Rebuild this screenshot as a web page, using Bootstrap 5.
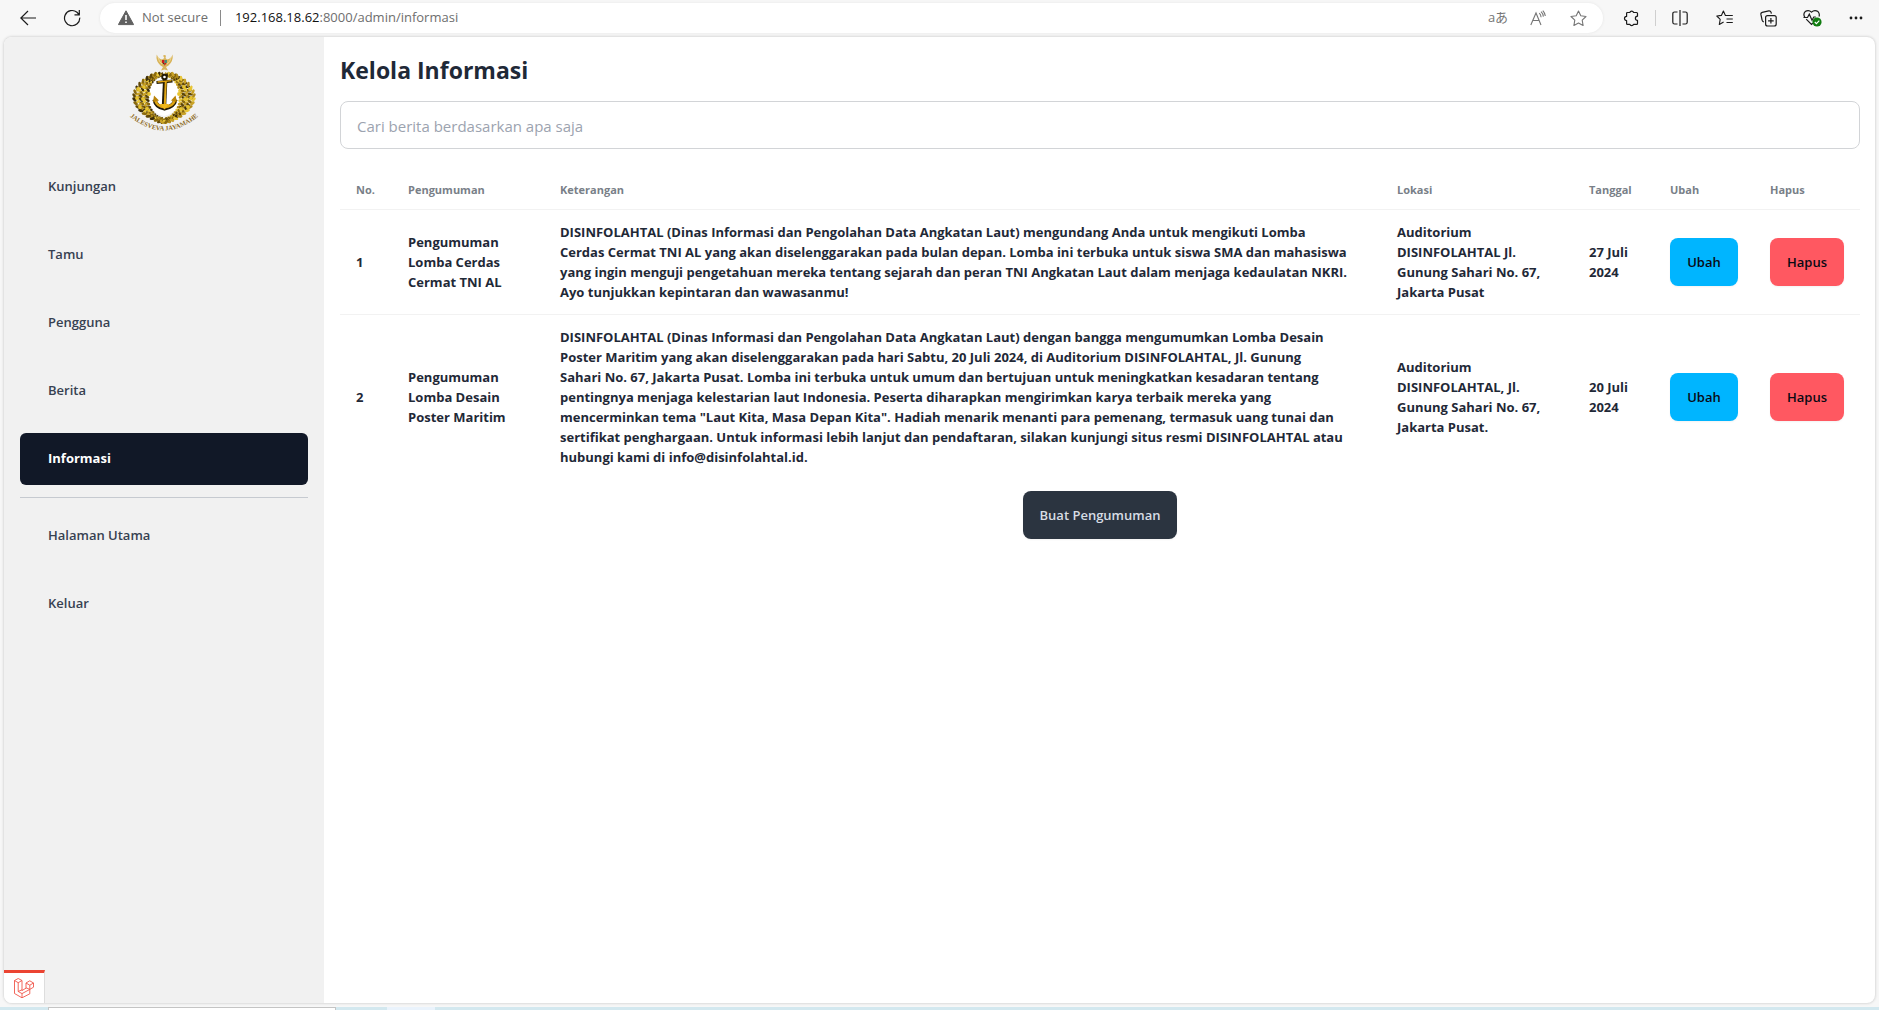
<!DOCTYPE html>
<html lang="id">
<head>
<meta charset="utf-8">
<meta name="viewport" content="width=device-width, initial-scale=1">
<title>Kelola Informasi</title>
<link href="https://cdn.jsdelivr.net/npm/bootstrap@5.3.0/dist/css/bootstrap.min.css" rel="stylesheet">
<style>
  :root { --ink: #1f2937; --chrome: #f7f7f7; --side: #f1f1f1; }
  body { font-family: "Open Sans", "Noto Sans", "Noto Sans CJK JP", sans-serif; color: var(--ink); background: var(--chrome); min-height: 100vh; }
  .browser-bar { height: 36px; padding: 0 1px 0 6px; }
  .tool-btn { width: 44px; height: 30px; border: 0; background: none; padding: 0; color: #1b1b1b; }
  .tool-btn.in-pill { width: 40px; color: #767676; }
  .tool-btn svg { display: block; }
  .address-pill { height: 30px; border-radius: 15px; background: #fff; margin: 0 6px; padding: 0 5px 0 18px; font-size: 13px; color: #6e6e6e; box-shadow: 0 0 3px #e4e4e4; }
  .address-pill .host { color: #111; }
  .bar-line { width: 1px; height: 16px; background: #8a8a8a; margin: 0 14px 0 12px; }
  .bar-line.soft { background: #cfcfcf; margin: 0 2px; }
  .translate { font-size: 13px; }
  .page-frame { margin: 1px 4px 4px; border-radius: 8px; background: #fff; overflow: hidden; box-shadow: 0 0 3px #bdbdbd; }
  .side { width: 320px; background: var(--side); padding: 15px 16px; }
  .side-logo { margin-bottom: 29px; }
  .side-logo svg { overflow: visible; }
  .side-nav { gap: 16px; }
  .side-nav a { height: 52px; padding: 0 28px 1px; border-radius: 6px; font-size: 13px; font-weight: 600; color: #374151; text-decoration: none; display: flex; align-items: center; }
  .side-nav a.active { background: #111827; color: #fff; font-weight: 700; }
  .side hr { margin: 12px 0; color: #9ca3af; opacity: .5; }
  .main-area { padding: 16px 15px 16px 16px; }
  .main-area h1 { font-size: 23px; line-height: 34px; font-weight: 700; margin: 0 0 14px; }
  .search-box { height: 48px; border: 1px solid #d2d4d7; border-radius: 8px; padding: 2px 16px 0; font-size: 15px; }
  .search-box::placeholder { color: #9ca3af; }
  .info-table { table-layout: fixed; margin: 21px 0 12px; font-size: 13px; line-height: 20px; --bs-table-color: var(--ink); border-color: #f2f2f2; }
  .info-table th, .info-table td { padding: 12px 16px; vertical-align: middle; font-weight: 700; }
  .info-table thead th { font-size: 11px; line-height: 15px; color: #797f88; }
  .info-table tbody tr:last-child > * { border-bottom: 0; }
  .info-table .date { padding-right: 8px; }
  .w-no { width: 52px; } .w-name { width: 152px; } .w-loc { width: 192px; }
  .w-date { width: 81px; } .w-edit { width: 100px; } .w-del { width: 106px; }
  .app-btn { height: 48px; padding: 0 16px; border: 1px solid transparent; border-radius: 8px; font-size: 13px; line-height: 20px; font-weight: 600; color: #0a0a14; box-shadow: 0 1px 2px rgba(0,0,0,.05); }
  .app-btn.edit { background: #00b5ff; width: 68px; padding: 0; }
  .app-btn.del { background: #ff5861; width: 74px; padding: 0; }
  .app-btn.create { background: #2b3440; color: #d7dde4; }
  .debug-tab { left: 0; bottom: 0; width: 41px; height: 33px; background: #fff; border: 0; border-top: 3px solid #eb4432; border-right: 1px solid #ddd; padding: 0; }
  .task-strip { height: 3px; background: #d3e8ef; padding-left: 48px; }
  .task-window { width: 288px; background: #fff; border: 1px solid #c4c4c4; border-bottom: 0; }
  .task-app { width: 48px; margin-left: 51px; background: #eaf3fc; }
</style>
<script src="https://cdn.jsdelivr.net/npm/bootstrap@5.3.0/dist/js/bootstrap.bundle.min.js"></script>
</head>
<body class="d-flex flex-column">

<header class="browser-bar d-flex align-items-center">
  <button class="tool-btn d-flex align-items-center justify-content-center" aria-label="Back"><svg width="16" height="16" viewBox="0 0 16 16" fill="none" stroke="currentColor" stroke-width="1.2"><path d="M8 1 .8 8 8 15M.8 8H16"/></svg></button>
  <button class="tool-btn d-flex align-items-center justify-content-center" aria-label="Refresh"><svg width="18" height="18" viewBox="0 0 18 18" fill="none" stroke="currentColor" stroke-width="1.2"><path d="M16.7 8.6A7.6 7.6 0 1 1 14 3.3L16 5.5M16.3 1v4.8h-4.8"/></svg></button>
  <div class="address-pill d-flex align-items-center flex-grow-1">
    <svg width="16" height="16" viewBox="0 0 16 16" class="me-2"><path d="M8 .8 15.6 14.6H.4Z" fill="#616161" stroke="#616161" stroke-linejoin="round"/><path d="M8 5v5M8 11.4v1.6" stroke="#fff" stroke-width="1.6"/></svg>
    <span>Not secure</span>
    <span class="bar-line"></span>
    <span class="flex-grow-1"><span class="host">192.168.18.62</span>:8000/admin/informasi</span>
    <button class="tool-btn in-pill translate" aria-label="Translate">aあ</button>
    <button class="tool-btn in-pill d-flex align-items-center justify-content-center" aria-label="Read aloud"><svg width="16" height="16" viewBox="0 0 16 16" fill="none" stroke="currentColor" stroke-width="1.1"><path d="M.8 15 6 3l5 12M2.8 10.5H9.2M9.3 3.2q1.6 1.5 1.8 4M11 1.6q2.2 2 2.4 5M12.8.6q2.4 2.6 2.5 5.4"/></svg></button>
    <button class="tool-btn in-pill d-flex align-items-center justify-content-center" aria-label="Favourite"><svg width="17" height="17" viewBox="0 0 17 17" fill="none" stroke="currentColor" stroke-width="1.1" stroke-linejoin="round"><path d="M8.5 1l2.3 4.8 5.2.7-3.8 3.7.9 5.3-4.6-2.5-4.6 2.5.9-5.3L1 6.500l5.200-.7z"/></svg></button>
  </div>
  <button class="tool-btn d-flex align-items-center justify-content-center" aria-label="Extensions"><svg width="16" height="17" viewBox="0 0 16 17" fill="none" stroke="currentColor" stroke-width="1.2" stroke-linejoin="round"><path d="M4.500 2.500h2.300a2 2 0 0 1 3.800 0h3q.9 0 .9.9v2.800a2 2 0 0 0 0 4.200v3q0 .9-.9.9h-3a2 2 0 0 1-3.800 0H4.500q-.9 0-.9-.9v-2.800a2 2 0 0 1 0-4.200v-3q0-.9.9-.9z"/></svg></button>
  <span class="bar-line soft"></span>
  <button class="tool-btn d-flex align-items-center justify-content-center" aria-label="Split screen"><svg width="16" height="16" viewBox="0 0 16 16" fill="none" stroke="currentColor" stroke-width="1.200"><path d="M8 0v16M5.500 2H2.600Q.8 2 .8 3.800v8.400Q.8 14 2.600 14h2.900M10.500 2h2.900q1.800 0 1.800 1.800v8.400q0 1.800-1.800 1.800h-2.900"/></svg></button>
  <button class="tool-btn d-flex align-items-center justify-content-center" aria-label="Favourites"><svg width="17" height="16" viewBox="0 0 17 16" fill="none" stroke="currentColor" stroke-width="1.100" stroke-linejoin="round"><path d="M11 5.500 9.400 5.400 7.400 1 5.400 5.400.8 6l3.400 3.300-.9 5.200 4.300-2.400M10.500 5.500H16.800M10.500 9h6.300M10.500 12.500h6.300"/></svg></button>
  <button class="tool-btn d-flex align-items-center justify-content-center" aria-label="Collections"><svg width="17" height="17" viewBox="0 0 17 17" fill="none" stroke="currentColor" stroke-width="1.200"><rect x="5.600" y="5.600" width="10.600" height="10.400" rx="2"/><path d="M10.900 8v5.600M8.100 10.800h5.600M3.800 11.800Q2.500 11.600 2.100 10.200L.9 4.400Q.6 2.700 2.200 2.300L8.800.9q1.700-.2 2.200 1.200l.4 1.500"/></svg></button>
  <button class="tool-btn d-flex align-items-center justify-content-center" aria-label="Browser essentials"><svg width="19" height="18" viewBox="0 0 19 18" fill="none" stroke="currentColor" stroke-width="1.200"><path d="M2 8.500Q-.3 5.200 2.200 2.600 5.600.2 8.500 3.200 11.500.2 15 2.600q2 2.200 1 4.900M3.200 10.200 8.500 15.500l1.500-1.400M.5 8.500h4L6.300 5.200l2.700 6 1.800-3.200h2"/><circle cx="14" cy="13" r="4.600" fill="#107c10" stroke="none"/><path d="m11.800 13 1.600 1.600 2.900-3" stroke="#fff" stroke-width="1.100"/></svg></button>
  <button class="tool-btn d-flex align-items-center justify-content-center" aria-label="More"><svg width="14" height="4" viewBox="0 0 14 4" fill="currentColor"><circle cx="2" cy="2" r="1.400"/><circle cx="7" cy="2" r="1.400"/><circle cx="12" cy="2" r="1.400"/></svg></button>
</header>

<div class="page-frame d-flex flex-grow-1 position-relative">
  <aside class="side flex-shrink-0">
    <div class="side-logo d-flex justify-content-center">
      <svg id="navy-logo" width="70" height="80" viewBox="0 0 70 80" role="img" aria-label="Jalesveva Jayamahe">
        <path d="M35 20C22 21 17 32 18 44 19 55 26 62 35 64 44 62 52 55 53 44 54 32 48 21 35 20Z" fill="#fff"/>
        <g id="wreath"></g>
        <g fill="#d9b45a">
          <path d="M35.500 6C34 4 33.600 3.200 35.500 3 37.300 3.200 37 4 36.500 6L38 7.500Q42 7 43.600 2.500 44.500 9 39.500 13.500L37 15 39 18.500 35.500 17.600 32 18.500 34 15 31.500 13.500Q26.500 9 27.700 2.500 29.500 7 33 7.500Z"/>
          <path d="M29 5Q30 10 33 12M42.300 5Q41 10 38 12" stroke="#f3dfa0" fill="none" stroke-width=".8"/>
        </g>
        <path d="M33 8h2.500v3H33z" fill="#d01a1a"/><path d="M35.500 8H38v3h-2.500z" fill="#4c8a7a"/><path d="M33.500 11h2v2z" fill="#222"/><path d="M35.500 11h2l-2 3z" fill="#d01a1a"/>
        <g fill="none" stroke="#231c08">
          <circle cx="35.500" cy="25" r="2.300" stroke-width="1.900"/>
          <path d="M36.200 27.500 35 54" stroke-width="4.400"/>
          <path d="M27.500 30.500 43.500 29" stroke-width="3"/>
          <path d="M25.500 47.500Q27 55 35.500 56.500 45 54.500 46.500 47.500" stroke-width="4.200"/>
        </g>
        <g fill="none" stroke="#e0a613">
          <path d="M36.800 29 35.800 53" stroke-width="2"/>
          <path d="M28.500 30 42.500 28.700" stroke-width="1.300"/>
          <path d="M26.500 49Q28.500 54.500 35.500 55.200 43.500 54.500 45.500 49" stroke-width="2.600"/>
        </g>
        <path d="m24 50 1-6.500 5 5zM48 50l-1.500-6.500-4.500 5z" fill="#b98309"/>
        <path d="M31 52h9l-4.500 5.500z" fill="#efb71a"/>
        <path id="motto-arc" d="M-1 63Q35 94 71 63" fill="none"/>
        <text font-family="Liberation Serif, serif" font-size="6.500" font-weight="700" fill="#8d6a1c"><textPath href="#motto-arc" startOffset="50%" text-anchor="middle">JALESVEVA JAYAMAHE</textPath></text>
      </svg>
    </div>
    <nav class="side-nav nav flex-column">
      <a href="#">Kunjungan</a>
      <a href="#">Tamu</a>
      <a href="#">Pengguna</a>
      <a href="#">Berita</a>
      <a href="#" class="active" aria-current="page">Informasi</a>
    </nav>
    <hr>
    <nav class="side-nav nav flex-column">
      <a href="#">Halaman Utama</a>
      <a href="#">Keluar</a>
    </nav>
  </aside>

  <main class="main-area flex-grow-1">
    <h1>Kelola Informasi</h1>
    <input type="search" class="search-box form-control" placeholder="Cari berita berdasarkan apa saja" aria-label="Cari berita">
    <table class="info-table table">
      <thead>
        <tr><th class="w-no">No.</th><th class="w-name">Pengumuman</th><th>Keterangan</th><th class="w-loc">Lokasi</th><th class="w-date date">Tanggal</th><th class="w-edit">Ubah</th><th class="w-del">Hapus</th></tr>
      </thead>
      <tbody>
        <tr>
          <td>1</td>
          <td>Pengumuman Lomba Cerdas Cermat TNI AL</td>
          <td>DISINFOLAHTAL (Dinas Informasi dan Pengolahan Data Angkatan Laut) mengundang Anda untuk mengikuti Lomba<br>Cerdas Cermat TNI AL yang akan diselenggarakan pada bulan depan. Lomba ini terbuka untuk siswa SMA dan mahasiswa<br>yang ingin menguji pengetahuan mereka tentang sejarah dan peran TNI Angkatan Laut dalam menjaga kedaulatan NKRI.<br>Ayo tunjukkan kepintaran dan wawasanmu!</td>
          <td>Auditorium DISINFOLAHTAL Jl. Gunung Sahari No. 67, Jakarta Pusat</td>
          <td class="date">27 Juli<br>2024</td>
          <td><button class="app-btn edit">Ubah</button></td>
          <td><button class="app-btn del">Hapus</button></td>
        </tr>
        <tr>
          <td>2</td>
          <td>Pengumuman Lomba Desain Poster Maritim</td>
          <td>DISINFOLAHTAL (Dinas Informasi dan Pengolahan Data Angkatan Laut) dengan bangga mengumumkan Lomba Desain<br>Poster Maritim yang akan diselenggarakan pada hari Sabtu, 20 Juli 2024, di Auditorium DISINFOLAHTAL, Jl. Gunung<br>Sahari No. 67, Jakarta Pusat. Lomba ini terbuka untuk umum dan bertujuan untuk meningkatkan kesadaran tentang<br>pentingnya menjaga kelestarian laut Indonesia. Peserta diharapkan mengirimkan karya terbaik mereka yang<br>mencerminkan tema "Laut Kita, Masa Depan Kita". Hadiah menarik menanti para pemenang, termasuk uang tunai dan<br>sertifikat penghargaan. Untuk informasi lebih lanjut dan pendaftaran, silakan kunjungi situs resmi DISINFOLAHTAL atau<br>hubungi kami di info@disinfolahtal.id.</td>
          <td>Auditorium DISINFOLAHTAL, Jl. Gunung Sahari No. 67, Jakarta Pusat.</td>
          <td class="date">20 Juli<br>2024</td>
          <td><button class="app-btn edit">Ubah</button></td>
          <td><button class="app-btn del">Hapus</button></td>
        </tr>
      </tbody>
    </table>
    <div class="d-flex justify-content-center">
      <button class="app-btn create">Buat Pengumuman</button>
    </div>
  </main>

  <button class="debug-tab position-absolute d-flex justify-content-center align-items-center" aria-label="Debugbar">
    <svg width="20" height="20" viewBox="0 0 20 20" fill="none" stroke="#f0564a" stroke-width=".9" stroke-linejoin="round"><path d="M.5 2.500 4.200.5 8 2.500v10l4-2.300V5l3.800-2.200L19.500 5v4.200l-3.700 2.200v4.400L8 19.800.5 15.500zM.5 2.500l3.700 2.200L8 2.500M4.200 4.700v8.800L8 15.600l7.800-4.200M4.200 13.500 8 11.800M8 15.600v4.200M12 5l3.800 2.200L19.500 5M15.800 7.200v4.200L12 9.800"/></svg>
  </button>
</div>

<div class="task-strip d-flex"><div class="task-window"></div><div class="task-app"></div></div>

<script>
  // Two mirrored branches of leaves and berries around the anchor.
  const wreath = document.getElementById('wreath');
  const shades = ['#5f4708', '#c9a227', '#8a6a10', '#e8c63a', '#3f300a', '#b08a1a'];
  let n = 0, leaves = '';
  for (let ring = 0; ring < 5; ring++) {
    for (let a = 8; a <= 172; a += 9) {
      for (const side of [-1, 1]) {
        const t = (a + ring * 4) * Math.PI / 180, grow = Math.sin(Math.min(t, Math.PI));
        const rx = 17 + ring * 3.2 * Math.max(grow, .35), ry = 22.500 + ring * .6;
        const x = 35 + side * rx * Math.sin(t), y = 45 - ry * Math.cos(t);
        const tilt = side * (a + (ring % 2 ? 35 : -35));
        leaves += `<ellipse cx="${x.toFixed(1)}" cy="${y.toFixed(1)}" rx="1.400" ry="2.700" fill="${shades[(n++ * 5 + ring) % 6]}" transform="rotate(${tilt} ${x.toFixed(1)} ${y.toFixed(1)})"/>`;
      }
    }
  }
  for (const [bx, by] of [[9, 37], [15, 35], [8, 46], [14, 47], [20, 42], [11, 55], [18, 57]])
    for (const cx of [bx, 70 - bx]) leaves += `<circle cx="${cx}" cy="${by}" r="1.900" fill="#e6c32e"/>`;
  wreath.innerHTML = leaves;
</script>
</body>
</html>
